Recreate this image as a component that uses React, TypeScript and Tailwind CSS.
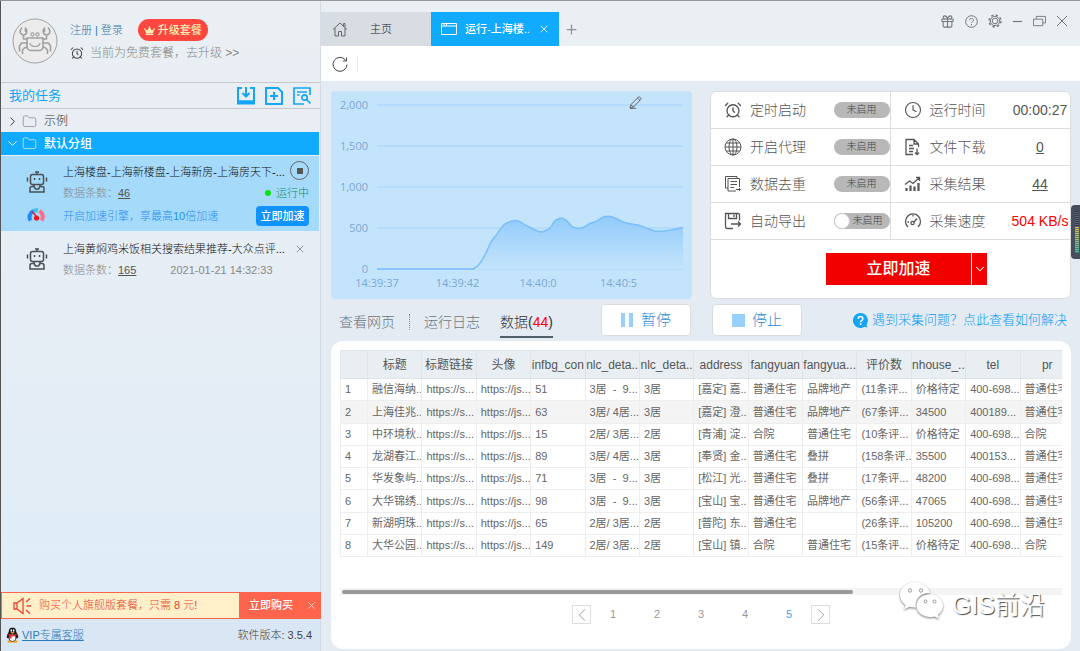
import { useState } from "react"
import type { ReactNode } from "react"
import { AlarmClock, ChevronDown, ChevronLeft, ChevronRight, Clock, Folder, Gift, Plus, X } from "lucide-react"
import { FaCrown } from "react-icons/fa"

const columns = ["标题", "标题链接", "头像", "infbg_con", "nlc_deta..", "nlc_deta..", "address", "fangyuan", "fangyua...", "评价数", "nhouse_..", "tel", "pr"]

const rows = [
  ["融信海纳..", "https://s...", "https://js...", "51", "3居  -  9...", "3居", "[嘉定] 嘉..", "普通住宅", "品牌地产", "(11条评...", "价格待定", "400-698...", "普通住宅"],
  ["上海佳兆..", "https://s...", "https://js...", "63", "3居/ 4居...", "3居", "[嘉定] 澄..", "普通住宅", "品牌地产", "(67条评...", "34500", "400189...", "普通住宅"],
  ["中环境秋..", "https://s...", "https://js...", "15", "2居/ 3居...", "2居", "[青浦] 淀..", "合院", "普通住宅", "(10条评...", "价格待定", "400-698...", "合院"],
  ["龙湖春江..", "https://s...", "https://js...", "89", "3居/ 4居...", "3居", "[奉贤] 金..", "普通住宅", "叠拼", "(158条评..", "35500", "400153...", "普通住宅"],
  ["华发象屿..", "https://s...", "https://js...", "71", "3居  -  9...", "3居", "[松江] 光..", "普通住宅", "叠拼", "(17条评...", "48200", "400-698...", "普通住宅"],
  ["大华锦绣..", "https://s...", "https://js...", "98", "3居  -  9...", "3居", "[宝山] 宝..", "普通住宅", "品牌地产", "(56条评...", "47065", "400-698...", "普通住宅"],
  ["新湖明珠..", "https://s...", "https://js...", "65", "2居/ 3居...", "2居", "[普陀] 东..", "普通住宅", "", "(26条评...", "105200", "400-698...", "普通住宅"],
  ["大华公园..", "https://s...", "https://js...", "149", "2居/ 3居...", "2居", "[宝山] 镇..", "合院", "普通住宅", "(15条评...", "价格待定", "400-698...", "合院"],
]

function Svg({ size = 18, box = 18, width = 1, className = "", children }: { size?: number; box?: number; width?: number; className?: string; children: ReactNode }) {
  return (
    <svg width={size} height={size} viewBox={`0 0 ${box} ${box}`} fill="none" stroke="currentColor" strokeWidth={width} className={`shrink-0 ${className}`} aria-hidden="true">
      {children}
    </svg>
  )
}

function CrabLogo() {
  return (
    <Svg size={46} box={46} width={1.6} className="text-[#a0a0a0]">
      <circle cx="23" cy="23" r="22" fill="#ececec" strokeWidth="1" />
      <g strokeLinecap="round" strokeLinejoin="round">
        <path d="M15 20h16v8.500c0 2.500-2 4-4 4h-8c-2 0-4-1.500-4-4z" />
        <path d="M18 25.500c1.500 4 8.500 4 10 0" strokeWidth="1.200" />
        <circle cx="20.500" cy="16.500" r="1.600" strokeWidth="1.100" />
        <circle cx="25.500" cy="16.500" r="1.600" strokeWidth="1.100" />
        <path d="M9.500 10c-2.500 3-1.500 6.500 2 7 3.500-.5 4.500-4 2-7v3.500M11.500 17v4H15" />
        <path d="M36.500 10c2.500 3 1.500 6.500-2 7-3.500-.5-4.500-4-2-7v3.500M34.500 17v4H31" />
        <path d="M15 25H9.500L7.500 28v5M15 29.500h-2L10.500 32v3.500" />
        <path d="M31 25h5.500l2 3v5M31 29.500h2l2.500 2.500v3.500" />
      </g>
    </Svg>
  )
}

function RobotIcon() {
  return (
    <Svg size={22} box={22} width={1.5} className="text-[#4b4f53]">
      <path d="M11 .5v3M4.500 5.500c0-1.300.7-2 2-2h9c1.300 0 2 .7 2 2v6c0 1.300-.7 2-2 2h-9c-1.300 0-2-.7-2-2zM9 1h4" />
      <path d="M1.500 6.500v4M20.500 6.500v4M8 13.500v2M14 13.500v2" />
      <path d="M8.500 7v2M13.500 7v2" />
      <path d="M4 21v-3.500c0-1.300.7-2 2-2h2l1.500 2.500h3l1.500-2.500h2c1.300 0 2 .7 2 2V21z" />
    </Svg>
  )
}

function GaugeIcon() {
  return (
    <Svg size={18} width={4}>
      <path d="M3.500 13.500A6.500 6.500 0 0 1 6.500 4" stroke="#1e88ff" />
      <path d="M6.500 4A6.500 6.500 0 0 1 11 3.500" stroke="#3bc3ea" />
      <path d="M12.500 4a6.500 6.500 0 0 1 2 9.500" stroke="#ff6b8b" />
      <path d="M5.500 4.500 10.500 11" stroke="#f2161d" strokeWidth="1.500" />
      <circle cx="9.500" cy="11" r="2.600" fill="#f2161d" stroke="none" />
    </Svg>
  )
}

function PenguinIcon() {
  return (
    <svg width="13" height="16" viewBox="0 0 13 16" className="shrink-0" aria-hidden="true">
      <ellipse cx="4" cy="14.500" rx="2.800" ry="1.300" fill="#f6a51c" />
      <ellipse cx="9" cy="14.500" rx="2.800" ry="1.300" fill="#f6a51c" />
      <path d="M6.500.5C3.800.5 2.700 2.500 2.700 5 1.400 7 .5 9 .8 10.700c.3.900 1 .2 1.400-.3.400 2 1.700 4 4.300 4s3.900-2 4.300-4c.4.500 1.100 1.200 1.400.3.300-1.700-.6-3.700-1.900-5.700 0-2.500-1.100-4.500-3.800-4.500z" fill="#171717" />
      <ellipse cx="6.500" cy="10.800" rx="3" ry="3.200" fill="#fff" />
      <ellipse cx="5.300" cy="3.500" rx=".8" ry="1.200" fill="#fff" />
      <ellipse cx="7.700" cy="3.500" rx=".8" ry="1.200" fill="#fff" />
      <ellipse cx="6.500" cy="5.700" rx="2" ry=".8" fill="#f6a51c" />
      <path d="M2.500 6.800c2.500 1.500 5.500 1.500 8 0l.3 1.500c-2 1-3.800 1.200-5.300 1.100v2.100H3.800V9l-1.500-.7z" fill="#ef2b2b" />
    </svg>
  )
}

function TaskMeta({ count, children }: { count: number; children: ReactNode }) {
  return (
    <div className="flex h-5 items-center text-[11px] text-[#888]">
      数据条数：
      <a href="#" className="text-[#555] underline">{count}</a>
      {children}
    </div>
  )
}

function Sidebar() {
  return (
    <aside className="flex w-[321px] shrink-0 flex-col border-r border-l border-r-[#d3dce6] border-l-[#555] bg-linear-to-b from-[#eaeff3] via-[#e6edf5] to-[#deedf7]">
      <div className="flex h-[81px] gap-3 pt-[17px] pl-[11px]">
        <CrabLogo />
        <div>
          <div className="flex h-6 items-center text-[11px] text-[#2f77b0]">
            <a href="#">注册</a>
            <span className="px-[3px]">|</span>
            <a href="#">登录</a>
            <button className="ml-[15px] flex h-[22px] w-[70px] items-center justify-center gap-[3px] rounded-full bg-[#ff463f] font-medium text-[#fff0b4]">
              <FaCrown size={11} />
              升级套餐
            </button>
          </div>
          <a href="#" className="flex h-[22px] items-center gap-[6px] text-xs text-[#888]">
            <AlarmClock size={14} strokeWidth={1.75} className="text-[#444]" />
            当前为免费套餐，去升级 &gt;&gt;
          </a>
        </div>
      </div>

      <div className="flex h-[27px] items-center border-y border-[#c5c9cd] pr-[9px] pl-2">
        <h2 className="flex-1 text-[13px] font-normal text-[#12a5f8]">我的任务</h2>
        <div className="flex gap-[10px] text-[#12a5f8]">
          <button aria-label="导入任务">
            <Svg width={2}>
              <path d="M5 1H1v15.500h16V1h-4M9 0v9M5.500 6 9 9.500 12.500 6" />
              <path d="M1 15h16" strokeWidth="3.500" />
            </Svg>
          </button>
          <button aria-label="新建任务">
            <Svg width={2}>
              <path d="M1 1h12l4 4v12H1zM9 5v8M5 9h8" />
            </Svg>
          </button>
          <button aria-label="搜索任务">
            <Svg width={1.7}>
              <path d="M17 8V1H1v16h10M4 5h10M4 8h2.500" />
              <circle cx="11.500" cy="10.500" r="2.700" />
              <path d="m13.500 12.500 4 4" />
            </Svg>
          </button>
        </div>
      </div>

      <button className="flex h-[23px] items-center pt-px pl-[4px] text-xs text-[#333]">
        <ChevronRight size={15} strokeWidth={1.5} className="mr-[2px]" />
        <Folder size={15} strokeWidth={1} className="mr-[7px] text-[#777]" />
        示例
      </button>
      <button className="mr-px flex h-[23px] items-center bg-[#10aaff] pl-[4px] text-xs font-medium text-white">
        <ChevronDown size={15} strokeWidth={1.5} className="mr-[2px]" />
        <Folder size={15} strokeWidth={1} className="mr-[7px]" />
        默认分组
      </button>

      <section className="mt-px mr-px grid grid-cols-[62px_1fr] bg-[#a6dafa] pt-[5px] pr-[10px] pb-[2px]">
        <div className="row-span-2 flex items-center pl-[25px]">
          <RobotIcon />
        </div>
        <div className="flex h-[22px] items-center justify-between text-[11px] whitespace-nowrap text-[#111]">
          上海楼盘-上海新楼盘-上海新房-上海房天下-...
          <button aria-label="停止任务" className="flex size-[19px] shrink-0 items-center justify-center self-start rounded-full border border-[#666]">
            <span className="size-[6px] bg-[#555]" />
          </button>
        </div>
        <TaskMeta count={46}>
          <span className="ml-auto flex items-center gap-[5px] text-[#078f5c]">
            <span className="size-[6px] rounded-full bg-[#08e30b]" />
            运行中
          </span>
        </TaskMeta>
        <div className="flex items-center pl-[26px]">
          <GaugeIcon />
        </div>
        <div className="flex h-[26px] items-center justify-between text-[11px] text-[#268ef0]">
          开启加速引擎，享最高10倍加速
          <button className="h-5 w-[53px] rounded-[4px] bg-[#1093ff] font-medium text-white">立即加速</button>
        </div>
      </section>

      <section className="mr-px grid grid-cols-[62px_1fr] pt-[7px] pr-[10px]">
        <div className="row-span-2 flex items-center pl-[25px]">
          <RobotIcon />
        </div>
        <div className="flex h-[22px] items-center justify-between text-[11px] whitespace-nowrap text-[#111]">
          上海黄焖鸡米饭相关搜索结果推荐-大众点评...
          <button aria-label="删除任务" className="pr-[3px] text-[#777]">
            <X size={12} strokeWidth={1.5} />
          </button>
        </div>
        <TaskMeta count={165}>
          <time className="ml-[34px]">2021-01-21 14:32:33</time>
        </TaskMeta>
      </section>

      <div className="mt-auto -mr-px flex h-[27px] border border-[#ff644c] bg-[#fff0c9] text-[11px]">
        <p className="flex flex-1 items-center gap-2 pl-[11px] text-[#e8452e]">
          <Svg width={1.3}>
            <path d="M1 6v6h3l6 4.500v-15L4 6zM4 6v6M13 5l4-3.500M13.500 9H18M13 13l4 3.500" />
          </Svg>
          购买个人旗舰版套餐，只需 8 元!
        </p>
        <div className="flex w-[81px] items-center justify-between bg-[#ff644c] pr-[3px] pl-[10px] text-white">
          <button className="font-medium">立即购买</button>
          <button aria-label="关闭">
            <X size={11} strokeWidth={1.5} />
          </button>
        </div>
      </div>
      <footer className="flex h-8 items-center gap-[3px] bg-[#d9e7f5] pr-2 pl-[5px] text-[11px] text-[#444]">
        <PenguinIcon />
        <a href="#" className="flex-1 text-[#2d7ab8] underline">VIP专属客服</a>
        软件版本: 3.5.4
      </footer>
    </aside>
  )
}

function TitleBar() {
  return (
    <header className="flex h-[45px] items-end bg-[#eaeff3] text-[11px]">
      <button className="flex h-[34px] w-[110px] items-center gap-[22px] bg-[#d8dde4] pl-[11px] text-[#222]">
        <Svg size={16} box={16} className="text-[#666]">
          <path d="M1 8.500 8 2l7 6.500M3 7v8h3.500v-4.500h3V15H13V7M11.500 5V2.500H13V6" />
        </Svg>
        主页
      </button>
      <div className="flex h-[34px] w-[128px] items-center justify-between bg-[#10aaff] pr-[9px] pl-[10px] text-white">
        <Svg size={16} box={16}>
          <path d="M.5 2.500h15v11H.5zM.5 5h15M3 2.500V5M5.500 2.500V5" />
        </Svg>
        <button className="font-medium">运行-上海楼..</button>
        <button aria-label="关闭标签">
          <X size={12} strokeWidth={1.75} />
        </button>
      </div>
      <button aria-label="新建标签" className="flex h-[34px] w-6 items-center justify-center text-[#8b929b]">
        <Plus size={15} strokeWidth={2} />
      </button>
      <div className="ml-auto flex h-10 items-center gap-[10px] self-start pr-3 text-[#777]">
        <button aria-label="礼物"><Gift size={15} strokeWidth={1.75} /></button>
        <button aria-label="帮助">
          <Svg size={13} box={13}>
            <circle cx="6.500" cy="6.500" r="5.800" />
            <path d="M4.600 5.200c0-2.500 3.900-2.500 3.900 0 0 1.300-2 1.400-2 2.800M6.500 9v1.200" />
          </Svg>
        </button>
        <button aria-label="设置">
          <Svg size={14} box={14}>
            <circle cx="7" cy="7" r="2.800" />
            <circle cx="7" cy="7" r="4.700" />
            <circle cx="7" cy="7" r="6" strokeWidth="1.300" strokeDasharray="2.350 2.360" />
          </Svg>
        </button>
        <button aria-label="最小化">
          <Svg size={11} box={12} width={1.3}><path d="M1 6h10" /></Svg>
        </button>
        <button aria-label="还原">
          <Svg size={13} box={14}>
            <path d="M.5 4.500h10v7H.5zM3.500 4V1.500h10v7h-3" />
          </Svg>
        </button>
        <button aria-label="关闭">
          <Svg size={12} box={12}><path d="m1 1 10 10M11 1 1 11" /></Svg>
        </button>
      </div>
    </header>
  )
}

const line =
  "M46 178H142C146 176 149 173 151 169C155 163 157 157 160 151C163 146 166 144 168 140C171 136 173 133 176 132C180 130 182 129 185 129.500C189 130 191 132 194 134C198 136 200 137 204 139C206 140 208 141 211 141C214 140 216 139 218 138C221 136 222 130 226 128.500C229 127 232 127 234 128.500C238 131 239 135 242 136C246 138 249 137.500 251 137C254 136 256 134 258 133C261 132 263 131 266 130C269 128 271 126 274 125.500C277 125 281 125 284 127C287 128 289 130 292 131C297 133 302 133 307 134C314 136 320 139 324 140C332 141 342 139 352 136.500"

function SpeedChart() {
  return (
    <div className="relative rounded bg-[#c4e4fb]">
      <svg viewBox="0 0 361 208" className="block w-full font-['Open_Sans',sans-serif] text-[11px] font-normal" role="img" aria-label="采集速度">
        <defs>
          <linearGradient id="fill" x1="0" y1="0" x2="0" y2="1">
            <stop offset="0" stopColor="#91cbfb" />
            <stop offset="1" stopColor="#c4e4fb" />
          </linearGradient>
        </defs>
        {["2,000", "1,500", "1,000", "500", "0"].map((label, i) => (
          <g key={label}>
            <path d={`M46 ${14 + i * 41}H352`} stroke="#aed9fc" strokeWidth="1.500" />
            <text x="37" y={18 + i * 41} textAnchor="end" fill="#7ba7d4">{label}</text>
          </g>
        ))}
        <path d={`${line}V178H142z`} fill="url(#fill)" />
        <path d={line} fill="none" stroke="#79bffb" strokeWidth="1.500" />
        {["14:39:37", "14:39:42", "14:40:0", "14:40:5"].map((label, i) => (
          <text key={label} x={46 + i * 80.5} y="196" textAnchor="middle" fill="#7ba7d4">{label}</text>
        ))}
      </svg>
      <button aria-label="编辑" className="absolute top-[5px] right-[50px] text-[#666]">
        <Svg size={13} box={13}>
          <path d="M1 12l1-3.500L9.500 1c.8-.8 3.200 1.200 2.200 2.500L4.500 11zM2 9l2.500 2M8.500 2.200l2.500 2.300M1 12.300h6" />
        </Svg>
      </button>
    </div>
  )
}

const settings = [
  { label: "定时启动", icon: <AlarmClock size={18} strokeWidth={1.75} /> },
  { label: "开启代理", icon: <Svg><circle cx="9" cy="9" r="8" /><ellipse cx="9" cy="9" rx="4" ry="8" /><path d="M9 1v16M1 9h16M2.500 5h13M2.500 13h13" /></Svg> },
  { label: "数据去重", icon: <Svg><path d="M4 3.500h11.500V12M4 3.500V16h8M4 13H1.500V1.500H13v2M6.500 6.500h6.500M6.500 9.500h6.500M6.500 12.500H10M12 14.500h4.500M15 13l1.500 1.500L15 16" /></Svg> },
  { label: "自动导出", icon: <Svg width={1.3}><path d="M15.500 8.500v-6l-1-1h-13v12.500c0 2 1 2.500 2 2.500H9M4.500 1.500v5h8v-5M10 2.500v2.500M7 12h9.500M14 9.500l2.500 2.500-2.500 2.500" /></Svg> },
]

const stats = [
  { label: "运行时间", value: "00:00:27", icon: <Clock size={18} strokeWidth={1.5} /> },
  { label: "文件下载", value: "0", icon: <Svg width={1.3}><path d="M9 16.500H2v-15h8L14.500 6v3M10 1.500V6h4.500M5 7.500h4M5 10.500h5M5 13.500h4M13 10.500v6M11 14.500l2 2 2-2" /></Svg> },
  { label: "采集结果", value: "44", icon: <Svg width={1.3}><path d="M1 9.500 5.500 6 9 8.500l6-5.500M12 2.500h3.500V6" /><path d="M2.500 16v-3M6.500 16v-5.500M10.500 16v-4.500M14.500 16V8" strokeWidth="2.200" /></Svg> },
  { label: "采集速度", value: "504 KB/s", icon: <Svg width={1.3}><path d="M4 15a7.500 7.500 0 1 1 10 0M9 4.500v-1.500M3.500 10H5" /><circle cx="8.500" cy="11" r="1.600" /><path d="m10 10 3-3.500" /></Svg> },
]

function ControlPanel() {
  return (
    <div className="rounded-md border border-[#d9dde0] bg-white text-sm text-[#555]">
      {settings.map((item, i) => {
        const stat = stats[i]
        return (
          <div key={item.label} className="grid h-[37px] grid-cols-2 border-b border-[#ddd]">
            <div className="flex items-center gap-2 border-r border-[#ddd] pl-[13px]">
              {item.icon}
              <span className="flex-1">{item.label}</span>
              {i === 3 ? (
                <label className="flex h-4 w-[56px] items-center gap-[3px] rounded-full bg-[#b8b8b8] text-[10px] text-[#444]">
                  <input type="checkbox" className="size-4 appearance-none rounded-full border border-[#ccc] bg-white" />
                  未启用
                </label>
              ) : (
                <button className="flex h-4 w-[56px] items-center justify-center rounded-full bg-[#b8b8b8] text-[10px] text-[#444]">未启用</button>
              )}
            </div>
            <div className="flex items-center gap-2 pl-[13px]">
              {stat.icon}
              <span className="flex-1">{stat.label}</span>
              <span className="w-[60px] text-center whitespace-nowrap">
                {i === 3 ? <span className="text-[#f00]">{stat.value}</span> : i === 0 ? stat.value : <a href="#" className="underline">{stat.value}</a>}
              </span>
            </div>
          </div>
        )
      })}
      <div className="flex h-[58px] items-center justify-center gap-px pl-8 text-white">
        <button className="h-8 w-[145px] bg-[#f20000] text-base font-medium">立即加速</button>
        <button aria-label="更多选项" className="flex h-8 w-[15px] items-center justify-center bg-[#f20000]">
          <ChevronDown size={14} strokeWidth={1.75} className="shrink-0" />
        </button>
      </div>
    </div>
  )
}

function DataTable() {
  return (
    <div className="overflow-hidden">
      <table className="h-[207px] w-[735px] table-fixed border-collapse text-[11px] font-normal text-[#666]">
        <thead>
          <tr className="h-7 bg-[#e9eef2] text-xs text-[#555]">
            <th className="w-[27px] border border-[#dfe4e8]" />
            {columns.map((name, i) => (
              <th key={i} className="overflow-hidden border border-[#dfe4e8] font-normal whitespace-nowrap">{name}</th>
            ))}
          </tr>
        </thead>
        <tbody>
          {rows.map((row, i) => (
            <tr key={i} className={i === 1 ? "h-[22px] bg-[#f4f4f4]" : "h-[22px]"}>
              <td className="border border-[#eee] pl-1">{i + 1}</td>
              {row.map((cell, j) => (
                <td key={j} className="overflow-hidden border border-[#eee] pl-1 whitespace-pre">{cell}</td>
              ))}
            </tr>
          ))}
        </tbody>
      </table>
    </div>
  )
}

function Pagination() {
  const [page, setPage] = useState(5)
  return (
    <nav className="flex h-[19px] items-center justify-center text-[11px] text-[#999]">
      <button aria-label="上一页" className="flex size-[19px] items-center justify-center border border-[#ddd]" onClick={() => setPage(Math.max(1, page - 1))}>
        <ChevronLeft size={22} strokeWidth={1} className="shrink-0" />
      </button>
      {[1, 2, 3, 4, 5].map((n) => (
        <button key={n} className={n === page ? "w-11 text-[#3a9ff0]" : "w-11"} onClick={() => setPage(n)}>
          {n}
        </button>
      ))}
      <button aria-label="下一页" className="flex size-[19px] items-center justify-center border border-[#ddd]" onClick={() => setPage(Math.min(5, page + 1))}>
        <ChevronRight size={22} strokeWidth={1} className="shrink-0" />
      </button>
    </nav>
  )
}

function Watermark() {
  return (
    <div className="absolute right-[26px] bottom-5 flex items-center gap-[7px] text-[25px] leading-10 text-white [text-shadow:1px_1px_1px_#444]">
      <svg width="46" height="40" viewBox="0 0 46 40" className="mb-2 drop-shadow-[0_1px_1px_#777]" aria-hidden="true">
        <path d="M16 1C7.500 1 1 7 1 14c0 4 2.200 7.500 5.500 10L5 28.500l5.500-2.700c2 .6 4 .9 6.500.7C15 18 22 11.500 31 12 29.500 5.500 23.500 1 16 1z" fill="#fff" />
        <path d="M31 13.500c-7.500 0-13.500 5-13.500 11.300S23.500 36 31 36c1.500 0 3-.2 4.500-.6l4.500 2.400-1.200-4c3.300-2.200 5.200-5.300 5.200-9 0-6.300-5.800-11.300-13-11.300z" fill="#fff" />
        <g fill="#fff" stroke="#999">
          <circle cx="11" cy="9.500" r="1.700" />
          <circle cx="22" cy="9.500" r="1.700" />
          <circle cx="26.500" cy="20.500" r="1.500" />
          <circle cx="35.500" cy="20.500" r="1.500" />
        </g>
      </svg>
      GIS前沿
    </div>
  )
}

export default function App() {
  return (
    <div className="relative flex min-h-screen border-t border-[#999] bg-[#e4ebf3] font-['Liberation_Sans','Noto_Sans_CJK_SC',sans-serif] font-light">
      <Sidebar />
      <div className="flex min-w-0 flex-1 flex-col">
        <TitleBar />
        <div className="flex h-[35px] items-center bg-white pl-[11px]">
          <button aria-label="刷新" className="border-r border-[#eee] pr-[9px] text-[#444]">
            <Svg size={16} box={16}>
              <path d="M13.500 4A7 7 0 1 0 15 8.500M14.500 1.500V5H11" />
            </Svg>
          </button>
        </div>

        <main className="flex flex-1 flex-col pt-[10px] pr-[9px] pb-[2px] pl-[10px]">
          <div className="grid grid-cols-2 gap-[18px]">
            <SpeedChart />
            <ControlPanel />
          </div>

          <div className="grid h-[42px] grid-cols-2 items-center text-sm text-[#6b757c]">
            <div className="flex h-[42px] items-center">
              <nav className="flex items-start pt-[9px] pl-2">
                <button>查看网页</button>
                <span className="mx-[14px] mt-[2px] h-4 border-l border-dotted border-[#888]" />
                <button>运行日志</button>
                <button className="ml-5 border-b-2 border-[#4f6069] pb-1 text-[#333]">
                  数据(<span className="text-[#f00]">44</span>)
                </button>
              </nav>
              <button className="mr-[10px] ml-auto flex h-8 w-[90px] items-center justify-center gap-2 rounded border border-[#d8dde2] bg-white text-[15px] text-[#3189d2]">
                <span className="h-[14px] w-3 border-x-4 border-[#99d0fb]" />
                暂停
              </button>
            </div>
            <div className="flex h-[42px] items-center justify-between pr-1 pl-[11px]">
              <button className="flex h-8 w-[90px] items-center justify-center gap-[7px] rounded border border-[#d8dde2] bg-white text-[15px] text-[#3189d2]">
                <span className="size-[13px] bg-[#99d0fb]" />
                停止
              </button>
              <a href="#" className="flex items-center gap-1 text-[13px] text-[#0a9df0]">
                <svg width="15" height="15" viewBox="0 0 15 15" aria-hidden="true">
                  <path d="M7.500 0a7.500 7.500 0 1 0 4 13.800l3 .7-1-2.700A7.500 7.500 0 0 0 7.500 0z" fill="#12a5f8" />
                  <path d="M5.300 5.800c0-3 4.500-3 4.500 0 0 1.700-2.200 1.500-2.200 3.500M7.600 10.300v1.600" fill="none" stroke="#fff" strokeWidth="1.600" />
                </svg>
                遇到采集问题？点此查看如何解决
              </a>
            </div>
          </div>

          <div className="relative flex flex-1 flex-col rounded-xl bg-white px-[9px] pt-[9px]">
            <DataTable />
            <div className="mt-auto mb-[10px] h-[7px] bg-[#f4f4f4] py-[2px] pl-[2px]">
              <div className="h-1 w-[71%] rounded-full bg-[#999]" />
            </div>
            <div className="pb-[25px]">
              <Pagination />
            </div>
            <Watermark />
          </div>
        </main>
      </div>

      {/* level meter docked to the window edge */}
      <div className="absolute top-[204px] right-0 h-[54px] w-[9px] rounded-l-[4px] bg-[#474e5d] pt-[6px] pr-px pl-1">
        <div className="h-4 bg-[repeating-linear-gradient(#343c48_0_1px,#5b6575_1px_2px)]" />
        <div className="h-[26px] bg-linear-to-b from-[#d0bd48] to-[#31bd9b]">
          <div className="h-full bg-[repeating-linear-gradient(transparent_0_1px,#474e5d99_1px_2px)]" />
        </div>
      </div>
    </div>
  )
}
